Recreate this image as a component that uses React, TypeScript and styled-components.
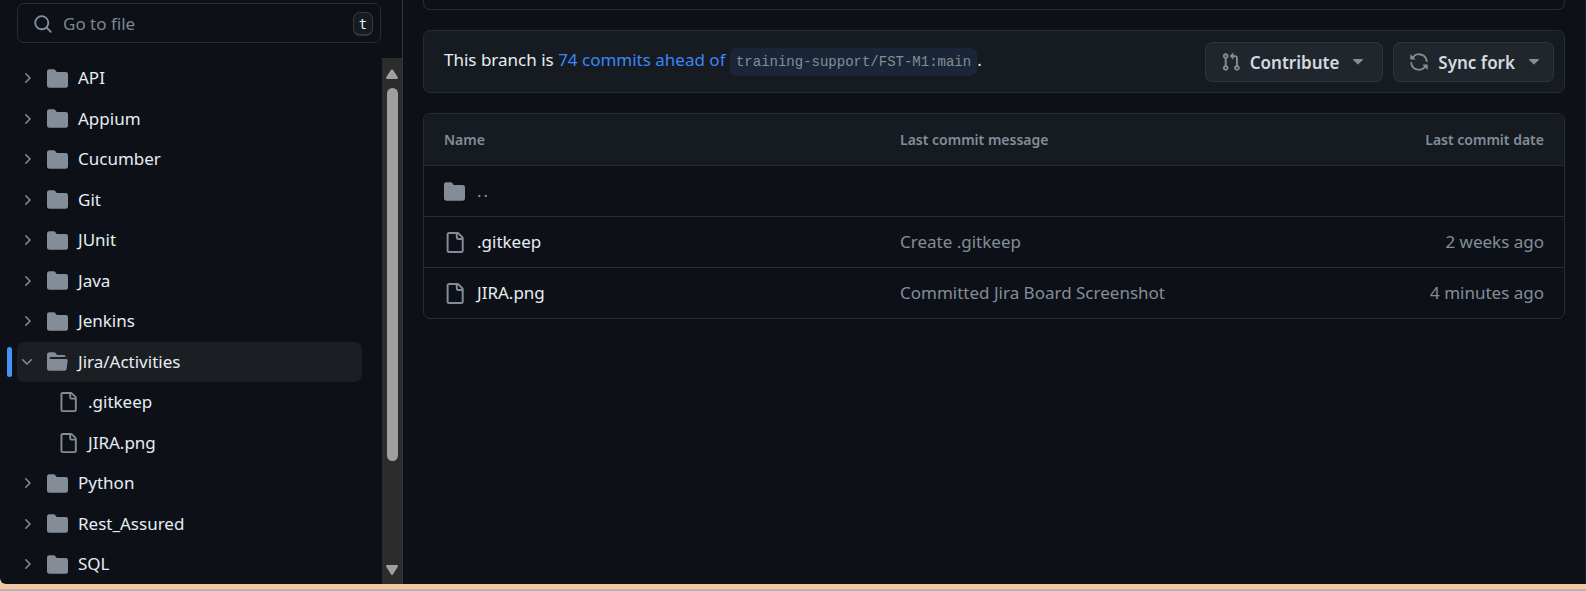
import React from "react";
import styled, { createGlobalStyle, css } from "styled-components";

const color = {
  canvas: "#0d1117",
  subtle: "#161b22",
  border: "#272c34",
  text: "#e6edf3",
  muted: "#848d97",
  link: "#3b86f7",
  button: "#21262d",
  buttonBorder: "#2f353d",
};

const GlobalStyle = createGlobalStyle`
  *, *::before, *::after { box-sizing: border-box; }
  body {
    margin: 0;
    background: ${color.canvas};
    color: ${color.text};
    font-family: "Noto Sans", "Open Sans", sans-serif;
    font-size: 17px;
    line-height: 24px;
  }
`;

const Screen = styled.div`
  display: flex;
  flex-direction: column;
  min-height: 100vh;
  background: #f6c89f;
`;

const Window = styled.div`
  flex: 1;
  display: flex;
  background: ${color.canvas};
  border-right: 1px solid #1c2128;
  border-bottom-left-radius: 6px;
`;

const Desk = styled.div`
  height: 7px;
  border-bottom: 2px solid #b3b3b1;
`;

const Sidebar = styled.aside`
  flex: none;
  display: flex;
  flex-direction: column;
  width: 403px;
  border-right: 1px solid #30363d;
`;

const SearchBox = styled.label`
  display: flex;
  align-items: center;
  height: 40px;
  margin: 3px 21px 15px 17px;
  padding: 2px 7px 0 15px;
  border: 1px solid ${color.border};
  border-radius: 7px;
  color: ${color.muted};
`;

const SearchInput = styled.input`
  flex: 1;
  min-width: 0;
  padding: 0 10px;
  border: 0;
  outline: 0;
  background: transparent;
  color: ${color.text};
  font: inherit;
  &::placeholder {
    color: #7d8590;
    opacity: 1;
  }
`;

const Kbd = styled.kbd`
  display: grid;
  place-items: center;
  width: 20px;
  height: 24px;
  border: 1px solid #343941;
  border-bottom-width: 2px;
  border-radius: 7px;
  background: ${color.subtle};
  color: ${color.text};
  font: 14px/16px "DejaVu Sans Mono", monospace;
`;

const TreePane = styled.div`
  flex: 1;
  display: flex;
`;

const Tree = styled.ul`
  flex: 1;
  display: flex;
  flex-direction: column;
  justify-content: space-between;
  margin: 0;
  padding: 0 20px 0 17px;
  list-style: none;
`;

const TreeItem = styled.li<{ $selected?: boolean; $nested?: boolean }>`
  position: relative;
  display: flex;
  align-items: center;
  height: 40px;
  padding-left: ${(p) => (p.$nested ? 41 : 0)}px;
  border-radius: 7px;
  ${(p) =>
    p.$selected &&
    css`
      background: #1b1f23;
      &::before {
        content: "";
        position: absolute;
        left: -10px;
        top: 5px;
        width: 5px;
        height: 30px;
        border-radius: 3px;
        background: #4493f8;
      }
    `}
`;

const Toggle = styled.button`
  display: grid;
  place-items: center;
  width: 20px;
  height: 40px;
  margin-right: 10px;
  padding: 0;
  border: 0;
  background: transparent;
  color: ${color.muted};
`;

const TreeLink = styled.a`
  display: flex;
  align-items: center;
  gap: 10px;
  color: ${color.text};
  text-decoration: none;
`;

const Scrollbar = styled.div`
  display: flex;
  flex-direction: column;
  align-items: center;
  width: 20px;
  background: #2c2c2c;
`;

const ScrollArrow = styled.div`
  display: grid;
  place-items: center;
  height: 30px;
  padding-top: 1px;
`;

const ScrollThumb = styled.div`
  flex: 4;
  width: 11px;
  border-radius: 6px;
  background: #9f9f9f;
`;

const ScrollRest = styled.div`
  flex: 1;
`;

const Main = styled.main`
  flex: 1;
  min-width: 0;
  display: flex;
  flex-direction: column;
  gap: 20px;
  padding: 0 20px;
`;

const PreviousPanel = styled.div`
  height: 10px;
  border: 1px solid ${color.border};
  border-top: 0;
  border-radius: 0 0 7px 7px;
`;

const BranchBar = styled.section`
  display: flex;
  align-items: center;
  gap: 10px;
  height: 63px;
  padding: 0 10px 0 20px;
  border: 1px solid ${color.border};
  border-radius: 7px;
  background: ${color.subtle};
`;

const BranchText = styled.p`
  flex: 1;
  margin: 0;
`;

const Link = styled.a`
  color: ${color.link};
  text-decoration: none;
`;

const BranchName = styled.code`
  display: inline-block;
  padding: 2px 6px;
  border-radius: 7px;
  background: #1a2637;
  color: ${color.muted};
  font: 14px/24px "Liberation Mono", monospace;
`;

const Button = styled.button<{ $roomy?: boolean }>`
  display: flex;
  align-items: center;
  height: 40px;
  padding: 0 ${(p) => (p.$roomy ? 19 : 14)}px 0 15px;
  border: 1px solid ${color.buttonBorder};
  border-radius: 7px;
  background: ${color.button};
  color: #d3dae1;
  font: inherit;
  font-weight: 600;
`;

const ButtonLabel = styled.span`
  margin: 2px 14px 0 9px;
`;

const TablePanel = styled.div`
  overflow: hidden;
  border: 1px solid ${color.border};
  border-radius: 7px;
`;

const Table = styled.table`
  width: 100%;
  table-layout: fixed;
  border-collapse: separate;
  border-spacing: 0;
`;

const HeadCell = styled.th<{ $width?: string; $end?: boolean }>`
  width: ${(p) => p.$width};
  height: 51px;
  padding: 0 20px;
  background: ${color.subtle};
  color: ${color.muted};
  font-size: 14px;
  font-weight: 600;
  text-align: ${(p) => (p.$end ? "right" : "left")};
`;

const Cell = styled.td<{ $end?: boolean }>`
  height: 51px;
  padding: 0 20px;
  border-top: 1px solid ${color.border};
  color: ${color.muted};
  text-align: ${(p) => (p.$end ? "right" : "left")};
`;

const NameCell = styled.div`
  display: flex;
  align-items: center;
  gap: 12px;
  color: ${color.muted};
`;

const FileLink = styled.a<{ $muted?: boolean }>`
  color: ${(p) => (p.$muted ? color.muted : color.text)};
  text-decoration: none;
  letter-spacing: ${(p) => (p.$muted ? "2px" : "normal")};
`;

const Svg = styled.svg`
  display: block;
  flex: none;
  fill: ${color.muted};
`;

const paths = {
  search:
    "M10.68 11.74a6 6 0 0 1-7.922-8.982 6 6 0 0 1 8.982 7.922l3.04 3.04a.749.749 0 0 1-.326 1.275.749.749 0 0 1-.734-.215ZM11.5 7a4.499 4.499 0 1 0-8.997 0A4.499 4.499 0 0 0 11.5 7Z",
  folder:
    "M1.75 1A1.75 1.75 0 0 0 0 2.75v10.5C0 14.216.784 15 1.75 15h12.5A1.75 1.75 0 0 0 16 13.25v-8.5A1.75 1.75 0 0 0 14.25 3H7.5a.25.25 0 0 1-.2-.1l-.9-1.2C6.07 1.26 5.55 1 5 1H1.75Z",
  folderOpen:
    "M.513 1.513A1.75 1.75 0 0 1 1.75 1h3.5c.55 0 1.07.26 1.4.7l.9 1.2a.25.25 0 0 0 .2.1H13a1 1 0 0 1 1 1v.5H2.75a.75.75 0 0 0 0 1.5h11.978a1 1 0 0 1 .994 1.117L15 13.25A1.75 1.75 0 0 1 13.25 15H1.75A1.75 1.75 0 0 1 0 13.25V2.75c0-.464.184-.91.513-1.237Z",
  file:
    "M2 1.75C2 .784 2.784 0 3.75 0h6.586c.464 0 .909.184 1.237.513l2.914 2.914c.329.328.513.773.513 1.237v9.586A1.75 1.75 0 0 1 13.25 16h-9.5A1.75 1.75 0 0 1 2 14.25Zm1.75-.25a.25.25 0 0 0-.25.25v12.5c0 .138.112.25.25.25h9.5a.25.25 0 0 0 .25-.25V6h-2.75A1.75 1.75 0 0 1 9 4.25V1.5Zm6.75.062V4.25c0 .138.112.25.25.25h2.688l-.011-.013-2.914-2.914-.013-.011Z",
  chevronRight:
    "M6.22 3.22a.75.75 0 0 1 1.06 0l4.25 4.25a.75.75 0 0 1 0 1.06l-4.25 4.25a.751.751 0 0 1-1.042-.018.751.751 0 0 1-.018-1.042L9.94 8 6.22 4.28a.75.75 0 0 1 0-1.06Z",
  chevronDown:
    "M12.78 5.22a.749.749 0 0 1 0 1.06l-4.25 4.25a.749.749 0 0 1-1.06 0L3.22 6.28a.749.749 0 1 1 1.06-1.06L8 8.939l3.72-3.719a.749.749 0 0 1 1.06 0Z",
  pullRequest:
    "M1.5 3.25a2.25 2.25 0 1 1 3 2.122v5.256a2.251 2.251 0 1 1-1.5 0V5.372A2.25 2.25 0 0 1 1.5 3.25Zm5.677-.177L9.573.677A.25.25 0 0 1 10 .854V2.5h1A2.5 2.5 0 0 1 13.5 5v5.628a2.251 2.251 0 1 1-1.5 0V5a1 1 0 0 0-1-1h-1v1.646a.25.25 0 0 1-.427.177L7.177 3.427a.25.25 0 0 1 0-.354ZM3.75 2.5a.75.75 0 1 0 0 1.5.75.75 0 0 0 0-1.5Zm0 9.5a.75.75 0 1 0 0 1.5.75.75 0 0 0 0-1.5Zm8.25.75a.75.75 0 1 0 1.5 0 .75.75 0 0 0-1.5 0Z",
  sync:
    "M1.705 8.005a.75.75 0 0 1 .834.656 5.5 5.5 0 0 0 9.592 2.97l-1.204-1.204a.25.25 0 0 1 .177-.427h3.646a.25.25 0 0 1 .25.25v3.646a.25.25 0 0 1-.427.177l-1.38-1.38A7.002 7.002 0 0 1 1.05 8.84a.75.75 0 0 1 .656-.834ZM8 2.5a5.487 5.487 0 0 0-4.131 1.869l1.204 1.204A.25.25 0 0 1 4.896 6H1.25A.25.25 0 0 1 1 5.75V2.104a.25.25 0 0 1 .427-.177l1.38 1.38A7.002 7.002 0 0 1 14.95 7.16a.75.75 0 0 1-1.49.178A5.5 5.5 0 0 0 8 2.5Z",
};

function Icon({ name, size = 20 }: { name: keyof typeof paths; size?: number }) {
  return (
    <Svg width={size} height={size} viewBox="0 0 16 16" aria-hidden="true">
      <path d={paths[name]} />
    </Svg>
  );
}

function Caret() {
  return (
    <Svg width="10" height="6" viewBox="0 0 10 6" aria-hidden="true">
      <path d="M.6 0h8.8c.5 0 .7.6.4.9L5.4 5.3a.6.6 0 0 1-.8 0L.2.9C-.1.6.1 0 .6 0Z" />
    </Svg>
  );
}

function Arrow({ down }: { down?: boolean }) {
  return (
    <svg width="12" height="10" viewBox="0 0 12 10" aria-hidden="true">
      <path
        fill="#9f9f9f"
        d={
          down
            ? "M1.2 0h9.6c1 0 1.5 1 1 1.8L7 9.2c-.5.9-1.5.9-2 0L.2 1.8C-.3 1 .2 0 1.2 0Z"
            : "M1.2 10h9.6c1 0 1.5-1 1-1.8L7 .8c-.5-.9-1.5-.9-2 0L.2 8.2C-.3 9 .2 10 1.2 10Z"
        }
      />
    </svg>
  );
}

type Entry = { name: string; kind: "folder" | "open" | "file" };

const entries: Entry[] = [
  { name: "API", kind: "folder" },
  { name: "Appium", kind: "folder" },
  { name: "Cucumber", kind: "folder" },
  { name: "Git", kind: "folder" },
  { name: "JUnit", kind: "folder" },
  { name: "Java", kind: "folder" },
  { name: "Jenkins", kind: "folder" },
  { name: "Jira/Activities", kind: "open" },
  { name: ".gitkeep", kind: "file" },
  { name: "JIRA.png", kind: "file" },
  { name: "Python", kind: "folder" },
  { name: "Rest_Assured", kind: "folder" },
  { name: "SQL", kind: "folder" },
];

const files = [
  { name: ".gitkeep", message: "Create .gitkeep", date: "2 weeks ago" },
  { name: "JIRA.png", message: "Committed Jira Board Screenshot", date: "4 minutes ago" },
];

function TreeRow({ name, kind }: Entry) {
  const open = kind === "open";
  return (
    <TreeItem $selected={open} $nested={kind === "file"}>
      {kind !== "file" && (
        <Toggle aria-label={`Toggle ${name}`} aria-expanded={open}>
          <Icon name={open ? "chevronDown" : "chevronRight"} size={16} />
        </Toggle>
      )}
      <TreeLink href="#">
        <Icon name={kind === "file" ? "file" : open ? "folderOpen" : "folder"} size={kind === "file" ? 20 : 21} />
        {name}
      </TreeLink>
    </TreeItem>
  );
}

export default function App() {
  return (
    <Screen>
      <GlobalStyle />
      <Window>
        <Sidebar>
          <SearchBox>
            <Icon name="search" />
            <SearchInput type="text" placeholder="Go to file" aria-label="Go to file" />
            <Kbd>t</Kbd>
          </SearchBox>
          <TreePane>
            <Tree>
              {entries.map((entry) => (
                <TreeRow key={entry.name} {...entry} />
              ))}
            </Tree>
            <Scrollbar aria-hidden="true">
              <ScrollArrow>
                <Arrow />
              </ScrollArrow>
              <ScrollThumb />
              <ScrollRest />
              <ScrollArrow>
                <Arrow down />
              </ScrollArrow>
            </Scrollbar>
          </TreePane>
        </Sidebar>
        <Main>
          <PreviousPanel />
          <BranchBar>
            <BranchText>
              This branch is <Link href="#">74 commits ahead of</Link>{" "}
              <BranchName>training-support/FST-M1:main</BranchName>.
            </BranchText>
            <Button $roomy>
              <Icon name="pullRequest" />
              <ButtonLabel>Contribute</ButtonLabel>
              <Caret />
            </Button>
            <Button>
              <Icon name="sync" />
              <ButtonLabel>Sync fork</ButtonLabel>
              <Caret />
            </Button>
          </BranchBar>
          <TablePanel>
            <Table>
              <thead>
                <tr>
                  <HeadCell $width="40%">Name</HeadCell>
                  <HeadCell>Last commit message</HeadCell>
                  <HeadCell $width="20%" $end>
                    Last commit date
                  </HeadCell>
                </tr>
              </thead>
              <tbody>
                <tr>
                  <Cell colSpan={3}>
                    <NameCell>
                      <Icon name="folder" size={21} />
                      <FileLink href="#" $muted>
                        ..
                      </FileLink>
                    </NameCell>
                  </Cell>
                </tr>
                {files.map((file) => (
                  <tr key={file.name}>
                    <Cell>
                      <NameCell>
                        <Icon name="file" size={21} />
                        <FileLink href="#">{file.name}</FileLink>
                      </NameCell>
                    </Cell>
                    <Cell>{file.message}</Cell>
                    <Cell $end>{file.date}</Cell>
                  </tr>
                ))}
              </tbody>
            </Table>
          </TablePanel>
        </Main>
      </Window>
      <Desk />
    </Screen>
  );
}
